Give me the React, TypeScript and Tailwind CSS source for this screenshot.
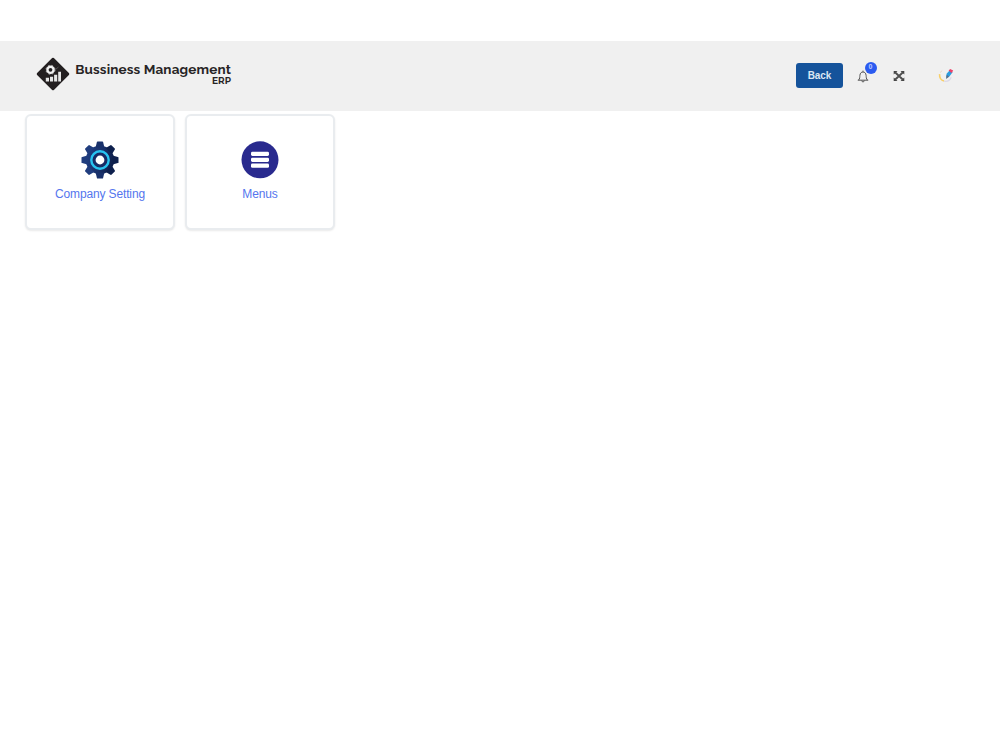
import type { ReactNode } from "react";

const LogoMark = () => (
  <svg width="34" height="34" viewBox="0 0 34 34" className="shrink-0">
    <path
      d="M17 2 L32 17 L17 32 L2 17 Z"
      fill="#231f20"
      stroke="#231f20"
      strokeWidth="2.5"
      strokeLinejoin="round"
    />
    <circle cx="14.5" cy="12.8" r="3.1" fill="none" stroke="#f0f0f0" strokeWidth="2.4" />
    <circle cx="14.5" cy="12.8" r="4.5" fill="none" stroke="#e0e0e0" strokeWidth="0.7" strokeDasharray="1.8 1.8" />
    <path d="M9.8 20.8h3.2v3.7h-3.2z M14 19.8h3.1v4.7H14z M18.1 17.8h3.1v6.7h-3.1z M22.2 14.8h2.8v9.7h-2.8z" fill="#e6e6e6" />
    <path d="M19.5 12.5l3-2.5" stroke="#6b6868" strokeWidth="0.7" />
  </svg>
);

const BellIcon = () => (
  <svg width="12" height="13" viewBox="0 0 12 13" fill="none" stroke="#555" strokeWidth="1">
    <path d="M6 .6v1.2 M.8 10.2h10.4 M1.5 10.1C3 8.8 2.7 6.9 2.9 5.3 3.2 3.1 4.3 2 6 2S8.8 3.1 9.1 5.3c.2 1.6-.1 3.5 1.4 4.8" />
    <path d="M4.7 10.6c.2 1.8 2.4 1.8 2.6 0" />
  </svg>
);

const ExpandIcon = () => (
  <svg width="12" height="12" viewBox="0 0 12 12" fill="#444">
    <path d="M.7 1h3.8L.7 4.5z M11.3 1v3.5L7.5 1z M.7 11V7.5L4.5 11z M11.3 11H7.5l3.8-3.5z" />
    <path d="M2 2.2l8 7.6M10 2.2L2 9.8" stroke="#505050" strokeWidth="1.9" />
  </svg>
);

const ProfileIcon = () => (
  <svg width="16" height="16" viewBox="0 0 16 16" fill="none">
    <path d="M4.2 2.6L2 4.6" stroke="#eed9c6" strokeWidth="1" />
    <path d="M1.6 6.2C1.3 9.3 3 12.3 6 13" stroke="#f8cf68" strokeWidth="1.6" />
    <path d="M6 13.2c3.4.6 6-1 7.2-4" stroke="#dcd9e8" strokeWidth="1.3" />
    <path d="M8 9.8L8.6 5.8l3.4-3.8 2.6 2.2-3.2 4.4z" fill="#2b9ddf" />
    <path d="M10.6 2.4l1.6-1.4 3 1.4-1.6 2.6z" fill="#ed4168" />
    <path d="M8 11L8.8 6.8l2.4 2z" fill="#596c88" />
  </svg>
);

const teeth = [0, 45, 90, 135, 180, 225, 270, 315];

const GearIcon = () => (
  <svg width="38" height="38" viewBox="-19 -19 38 38">
    <defs>
      <linearGradient id="gear" gradientUnits="userSpaceOnUse" x1="-16" y1="-4" x2="16" y2="4">
        <stop offset="0" stopColor="#203f82" />
        <stop offset="0.5" stopColor="#19316b" />
        <stop offset="1" stopColor="#0b1b43" />
      </linearGradient>
    </defs>
    <circle r="14.2" fill="url(#gear)" />
    {teeth.map((angle) => (
      <path
        key={angle}
        d="M-4.4 -12.5 L-3.1 -17.9 Q-3 -18.5 -2.4 -18.5 H2.4 Q3 -18.5 3.1 -17.9 L4.4 -12.5 Z"
        fill={angle > 0 && angle < 180 ? "#0e204d" : angle > 180 ? "#203d7e" : "#19316b"}
        transform={`rotate(${angle})`}
      />
    ))}
    <circle r="8.7" fill="#172b64" stroke="#27c3f0" strokeWidth="2.4" />
    <circle r="4.4" fill="#fff" />
  </svg>
);

const MenuIcon = () => (
  <svg width="38" height="38" viewBox="0 0 38 38">
    <circle cx="19" cy="18.8" r="18.5" fill="#292a8e" />
    <g fill="#fff">
      <rect x="10" y="10.8" width="18" height="4.2" rx="1.4" />
      <rect x="10" y="16.7" width="18" height="4.2" rx="1.4" />
      <rect x="10" y="22.6" width="18" height="4.2" rx="1.4" />
    </g>
  </svg>
);

type CardProps = {
  label: string;
  icon: ReactNode;
};

const Card = ({ label, icon }: CardProps) => (
  <a className="flex h-[116px] w-[150px] flex-col items-center rounded-md border-2 border-[#e9ecef] bg-white pt-[25px] shadow-[0_1px_2px_rgba(0,0,0,0.09)]">
    {icon}
    <span className="mt-[7px] text-[12px] leading-4 tracking-[-0.14px] text-[#5576ee]">{label}</span>
  </a>
);

const Header = () => (
  <header className="flex h-[70px] items-center justify-between bg-[#f0f0f0] pr-[46px] pl-9">
    <div className="mt-[-4px] flex items-center">
      <LogoMark />
      <div className="mt-[-2px] ml-1.5 flex w-[155px] flex-col items-end font-['Raleway','Lato',sans-serif] font-bold text-[#272425]">
        <span className="text-[13.5px] leading-[14px] tracking-[0.14px] whitespace-nowrap">
          Bussiness Management
        </span>
        <span className="text-[10px] leading-[9px]">ERP</span>
      </div>
    </div>
    <div className="flex items-center">
      <button className="mt-[-2px] h-[25px] w-[47px] rounded-[3px] bg-[#15539b] text-[10px] font-bold tracking-[-0.1px] text-[#dbe7f3]">
        Back
      </button>
      <div className="relative ml-[14px]">
        <BellIcon />
        <span className="absolute -top-2 left-[7.5px] flex size-3 items-center justify-center rounded-full bg-[#2b5bf0] text-[7px] font-bold text-[#bccbff]">
          0
        </span>
      </div>
      <div className="ml-6">
        <ExpandIcon />
      </div>
      <div className="mt-[-1px] ml-[33px]">
        <ProfileIcon />
      </div>
    </div>
  </header>
);

const App = () => {
  return (
    <div className="min-h-screen bg-white pt-[41px] font-['Liberation_Sans',Arial,sans-serif]">
      <Header />
      <main className="flex gap-2.5 px-[25px] pt-[3px]">
        <Card label="Company Setting" icon={<GearIcon />} />
        <Card label="Menus" icon={<MenuIcon />} />
      </main>
    </div>
  );
};

export default App;
